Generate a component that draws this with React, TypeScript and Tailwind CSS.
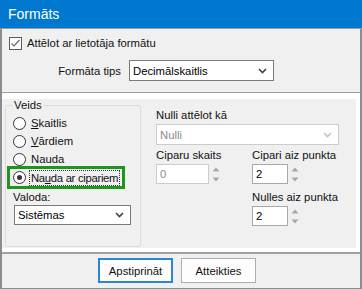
import React from "react"

const font = "font-['Liberation_Sans',Arial,sans-serif]"

function Chevron({ light = false }: { light?: boolean }) {
  return (
    <svg width="9" height="6" viewBox="0 0 9 6" className="shrink-0">
      <path d="M1 1l3.5 3.5L8 1" fill="none" stroke={light ? "#c4c4c4" : "#404040"} strokeWidth="1.6" />
    </svg>
  )
}

function Spinner() {
  return (
    <svg width="8" height="20" viewBox="0 0 8 20" className="ml-[3px] shrink-0">
      <path d="M0.5 7.5L4 3.5l3.5 4z" fill="#a8a8a8" />
      <path d="M0.5 13.5h7L4 17.5z" fill="#a8a8a8" />
    </svg>
  )
}

function Select({ value, disabled = false, className = "" }: { value: string; disabled?: boolean; className?: string }) {
  return (
    <div
      className={`flex items-center justify-between bg-white border pl-[3px] pr-[6px] ${
        disabled ? "border-[#cccccc] text-[#8c8c8c]" : "border-[#7a7a7a] text-black"
      } ${className}`}
    >
      <span className="whitespace-nowrap">{value}</span>
      <Chevron light={disabled} />
    </div>
  )
}

function NumInput({ value, disabled = false, w }: { value: string; disabled?: boolean; w: string }) {
  return (
    <div className="flex items-center">
      <div
        className={`${w} h-[20px] bg-white border flex items-center pl-[3px] ${
          disabled ? "border-[#cccccc] text-[#8c8c8c]" : "border-[#a8a8a8] text-black"
        }`}
      >
        {value}
      </div>
      <Spinner />
    </div>
  )
}

function Radio({ checked = false }: { checked?: boolean }) {
  return (
    <div className="w-[13px] h-[13px] rounded-full border border-[#333333] bg-white flex items-center justify-center shrink-0">
      {checked && <div className="w-[5px] h-[5px] rounded-full bg-[#333333]" />}
    </div>
  )
}

export default function App() {
  return (
    <div className={`${font} text-[11.3px] leading-[14px] text-[#111] whitespace-nowrap w-[362px] h-[289px] bg-[#f0f0f0] border-x-2 border-b border-[#8c8c8c] flex flex-col`}>
      {/* title bar */}
      <div className="h-[29px] -mx-[2px] bg-[#0078cf] border-b border-[#9a9a9a] flex items-center pl-[8px] text-white text-[14px] shrink-0">
        Formāts
      </div>

      {/* top options */}
      <div className="h-[64px] border-b border-[#a0a0a0] flex flex-col shrink-0">
        <label className="flex items-center mt-[7px] ml-[7px] h-[14px]">
          <span className="w-[13px] h-[13px] border border-[#5a5a5a] bg-white flex items-center justify-center">
            <svg width="11" height="11" viewBox="0 0 11 11">
              <path d="M1.5 5.5l2.5 2.5 5.5-6" fill="none" stroke="#6a6a6a" strokeWidth="1.2" />
            </svg>
          </span>
          <span className="ml-[5px]">Attēlot ar lietotāja formātu</span>
        </label>
        <div className="flex items-center mt-[10px]">
          <span className="w-[119px] text-right">Formāta tips</span>
          <Select value="Decimālskaitlis" className="ml-[8px] w-[145px] h-[21px]" />
        </div>
      </div>

      {/* main panel */}
      <div className="h-[159px] border-t-[6px] border-r-[4px] border-b-[4px] border-white flex shrink-0">
        <fieldset className="ml-[3px] w-[136px] h-[148px] border border-[#dcdcdc] rounded-[2px] px-[7px] flex flex-col">
          <legend className="px-[1px] leading-[13px]">Veids</legend>
          <div className="flex flex-col mt-[2px]">
            <div className="h-[18px] flex items-center gap-[5px]">
              <Radio />
              <span><u>S</u>kaitlis</span>
            </div>
            <div className="h-[18px] flex items-center gap-[5px]">
              <Radio />
              <span><u>V</u>ārdiem</span>
            </div>
            <div className="h-[18px] flex items-center gap-[5px]">
              <Radio />
              <span>Nauda</span>
            </div>
            <div className="h-[23px] -mt-[2px] -ml-[6px] w-[118px] border-[3px] border-[#1e961e] flex items-center pl-[3px] gap-[3px]">
              <Radio checked />
              <span className="border border-dotted border-[#333] px-[1px] leading-[14px] tracking-[-0.3px]">
                Na<u>u</u>da ar cipariem
              </span>
            </div>
          </div>
          <span className="mt-[1px] h-[14px]">Valoda:</span>
          <Select value="Sistēmas" className="mt-[1px] w-[117px] h-[20px] ml-[1px]" />
        </fieldset>

        <div className="ml-[15px] flex flex-col pt-[9px]">
          <span>Nulli attēlot kā</span>
          <Select value="Nulli" disabled className="mt-[2px] w-[183px] h-[21px]" />
          <div className="flex mt-[3px]">
            <div className="w-[96px] flex flex-col">
              <span>Ciparu skaits</span>
              <div className="mt-[2px]">
                <NumInput value="0" disabled w="w-[53px]" />
              </div>
            </div>
            <div className="flex flex-col">
              <span>Cipari aiz punkta</span>
              <div className="mt-[2px]">
                <NumInput value="2" w="w-[36px]" />
              </div>
              <span className="mt-[6px]">Nulles aiz punkta</span>
              <div className="mt-[2px]">
                <NumInput value="2" w="w-[36px]" />
              </div>
            </div>
          </div>
        </div>
      </div>

      {/* buttons */}
      <div className="flex-1 border-t-2 border-[#a0a0a0] flex items-start pt-[4px] pl-[96px] gap-[8px]">
        <button className="w-[75px] h-[25px] bg-[#fdfdfd] border-2 border-[#2a86d6] flex items-center justify-center">
          Apstiprināt
        </button>
        <button className="w-[75px] h-[25px] bg-[#fdfdfd] border border-[#adadad] flex items-center justify-center">
          Atteikties
        </button>
      </div>
    </div>
  )
}
